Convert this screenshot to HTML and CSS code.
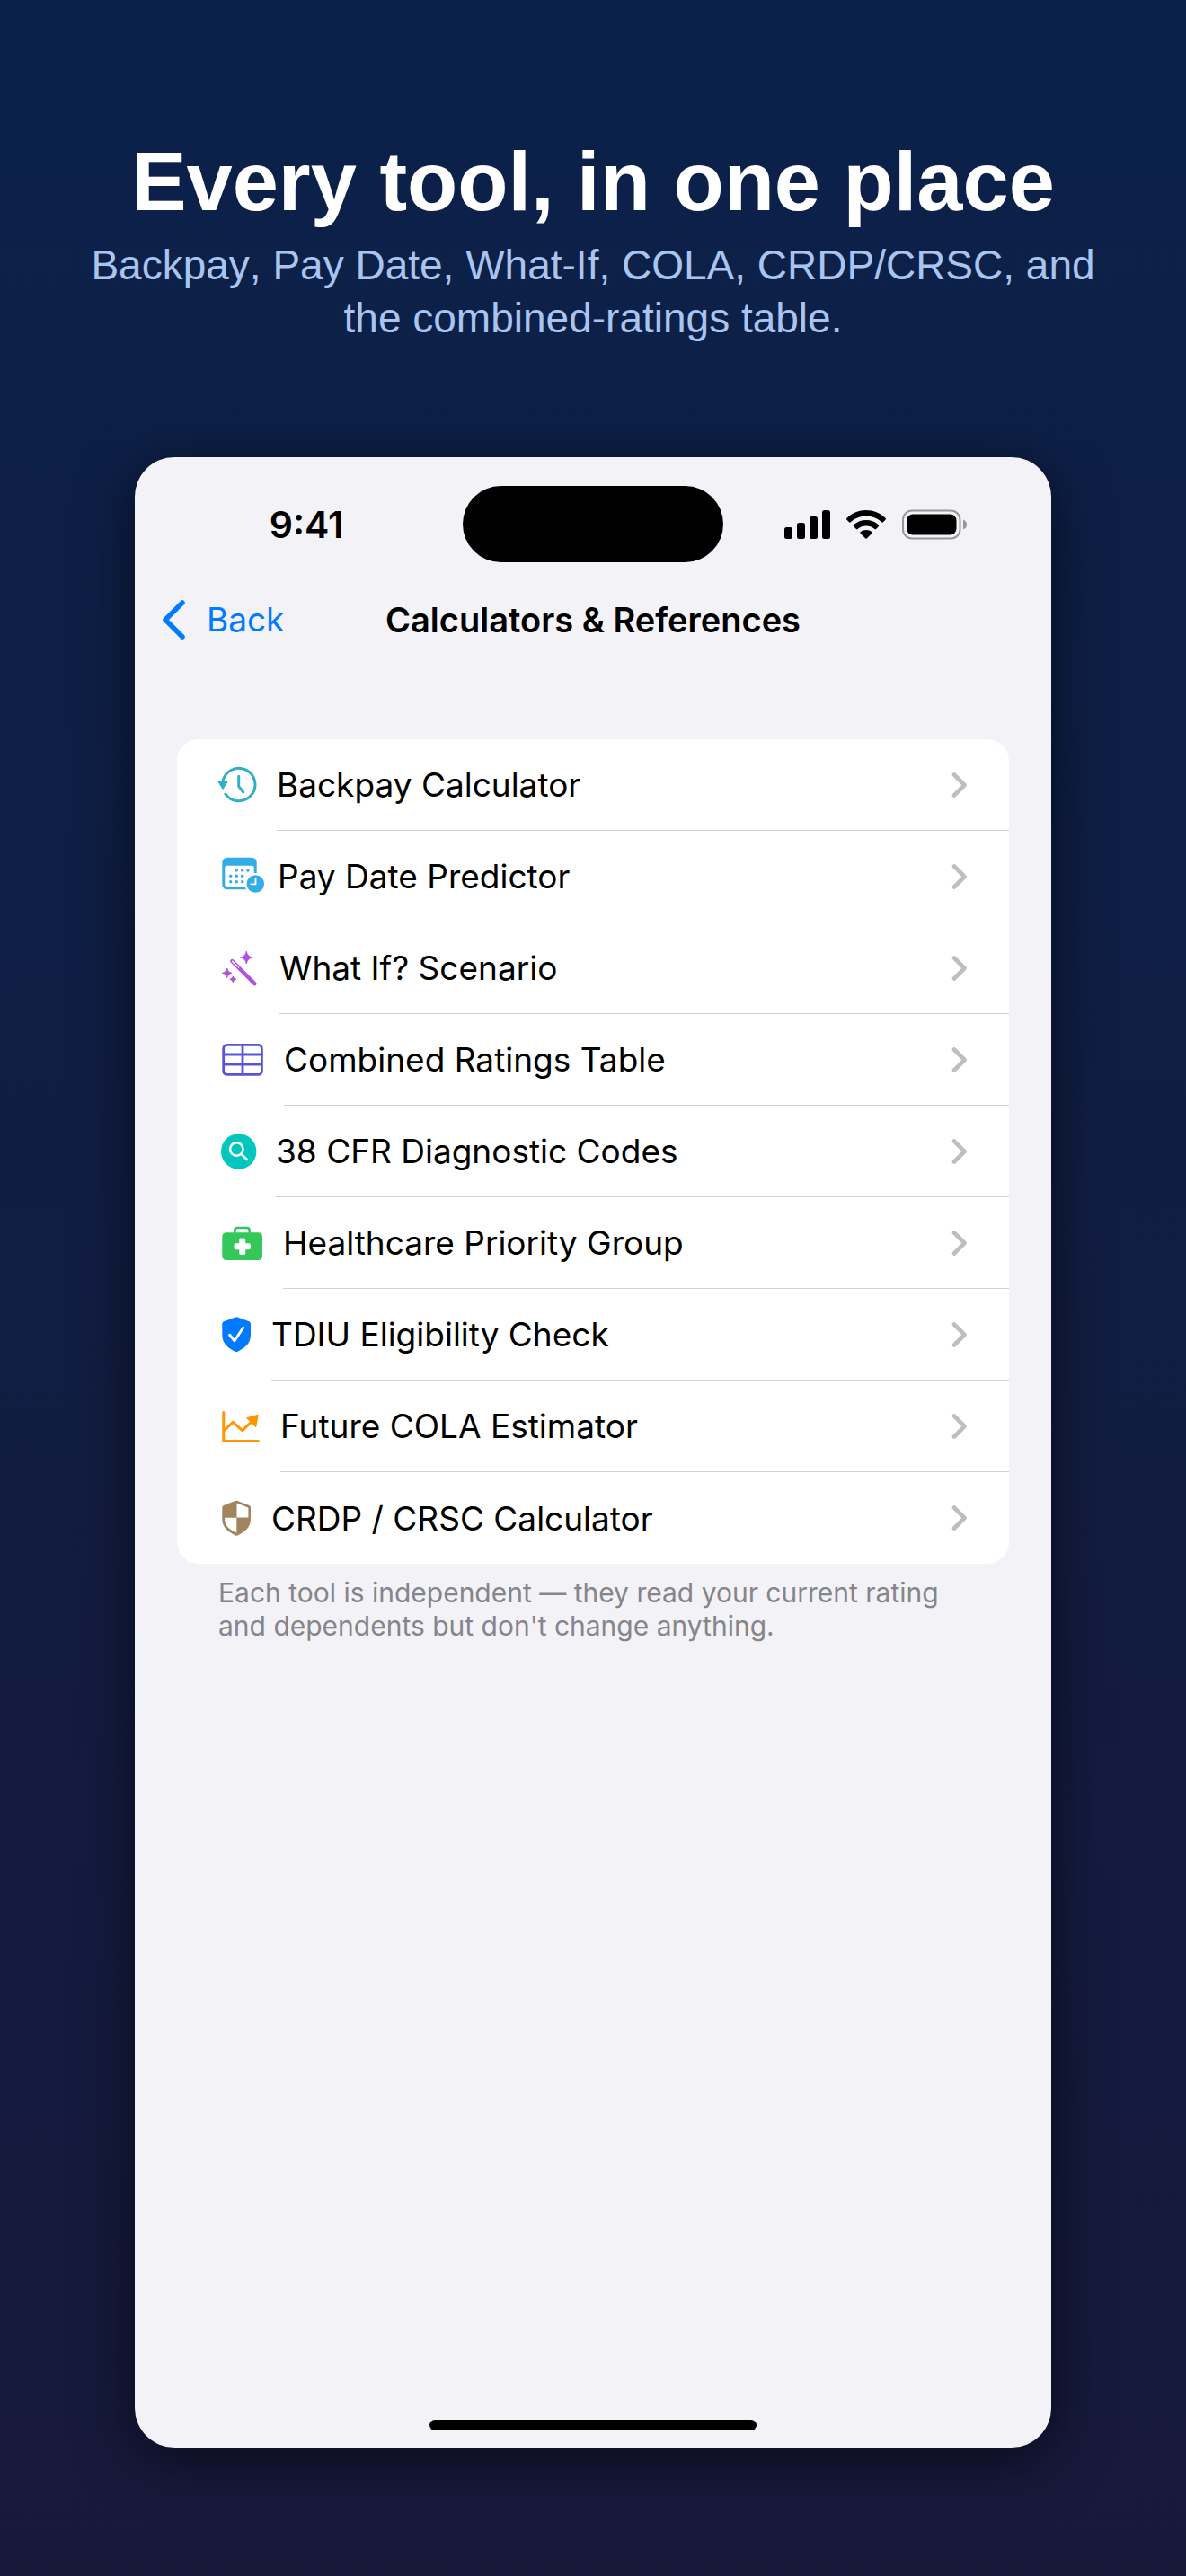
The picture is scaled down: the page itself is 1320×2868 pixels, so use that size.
FILE: index.html
```html
<!DOCTYPE html>
<html lang="en">
<head>
    <meta charset="UTF-8">
    <meta name="viewport" content="width=device-width, initial-scale=1.0">
    <title>Calculators &amp; References</title>
    <link rel="stylesheet" href="styles.css">
</head>
<body>

    <!-- Disclosure chevron, shared by every row -->
    <svg class="symbols" width="0" height="0">
        <symbol id="chevron" viewBox="0 0 18 30">
            <path d="M3 3.500 L14.500 15 L3 26.500" fill="none" stroke="#bebec0" stroke-width="4.600" stroke-linecap="round" stroke-linejoin="round"/>
        </symbol>
    </svg>

    <header class="hero">
        <h1>Every tool, in one place</h1>
        <p>Backpay, Pay Date, What-If, COLA, CRDP/CRSC, and the combined-ratings table.</p>
    </header>

    <main class="phone">

        <!-- Status bar -->
        <div class="status-bar">
            <div class="time">9:41</div>
            <div class="island"></div>
            <div class="status-icons">
                <svg width="51" height="34" viewBox="0 0 51 34">
                    <rect x="0" y="20" width="9" height="13" rx="2.5"/>
                    <rect x="14" y="15" width="9" height="18" rx="2.5"/>
                    <rect x="28" y="8" width="9" height="25" rx="2.5"/>
                    <rect x="42" y="1" width="9" height="32" rx="2.5"/>
                </svg>
                <svg width="44" height="34" viewBox="0 0 44 34">
                    <path d="M0.3 10 C12.5 -2 31.500 -2 43.700 10 Q44.300 10.800 43.700 11.500 L40.700 14.400 Q40 14.900 39.300 14.300 C29.500 5.200 14.500 5.200 4.700 14.300 Q4 14.900 3.300 14.400 L0.300 11.500 Q-0.300 10.800 0.300 10Z"/>
                    <path d="M8 17.500 C16 10.300 28 10.300 36 17.500 Q36.600 18.300 36 19 L33 21.900 Q32.300 22.500 31.500 21.900 C26 17.300 18 17.300 12.500 21.900 Q11.700 22.500 11 21.900 L8 19 Q7.400 18.300 8 17.500Z"/>
                    <path d="M15.600 25.200 C19 22.200 25 22.200 28.400 25.200 Q29 26 28.400 26.700 L22.700 32.400 Q22 33 21.300 32.400 L15.600 26.700 Q15 26 15.600 25.200Z"/>
                </svg>
                <svg width="72" height="34" viewBox="0 0 72 34">
                    <rect x="1" y="1.500" width="63.500" height="31" rx="10" fill="none" stroke="#98979b" stroke-width="2"/>
                    <rect x="5" y="5.500" width="55.500" height="23" rx="7"/>
                    <path d="M68 11.500 Q72 13 72 17 Q72 21 68 22.500Z" fill="#98979b"/>
                </svg>
            </div>
        </div>

        <!-- Navigation bar -->
        <nav class="nav-bar">
            <a class="back-link" href="#">
                <svg width="26" height="46" viewBox="0 0 26 46">
                    <path d="M23 4 L4 23 L23 42" fill="none" stroke="#007aff" stroke-width="5.500" stroke-linecap="round" stroke-linejoin="round"/>
                </svg>
                Back
            </a>
            <h2>Calculators &amp; References</h2>
        </nav>

        <!-- Tool list -->
        <ul class="tools">
            <li>
                <a href="#">
                    <svg class="icon" width="49" height="48" viewBox="0 0 49 48">
                        <g fill="none" stroke="#30b0c7" stroke-width="3" stroke-linecap="round" stroke-linejoin="round">
                            <path d="M4.800 20.500 A18.200 18.200 0 1 1 8 34.200"/>
                            <path d="M22.700 14.300 V25.300 L27.800 32"/>
                        </g>
                        <path d="M0 20.500 H10 L5 28.500Z" fill="#30b0c7" stroke="#30b0c7" stroke-linejoin="round"/>
                    </svg>
                    <span class="label">Backpay Calculator <svg class="chevron"><use href="#chevron"/></svg></span>
                </a>
            </li>
            <li>
                <a href="#">
                    <svg class="icon" width="50" height="48" viewBox="0 0 50 48">
                        <rect x="4.300" y="2.700" width="38.400" height="35.600" rx="5.500" fill="#32ade6"/>
                        <rect x="7.300" y="11.700" width="32.400" height="23.300" rx="2.500" fill="#fff"/>
                        <g fill="#32ade6">
                            <circle cx="20.300" cy="17" r="1.700"/>
                            <circle cx="26.700" cy="17" r="1.700"/>
                            <circle cx="33" cy="17" r="1.700"/>
                            <circle cx="13.700" cy="23.300" r="1.700"/>
                            <circle cx="20.300" cy="23.300" r="1.700"/>
                            <circle cx="26.700" cy="23.300" r="1.700"/>
                            <circle cx="13.700" cy="29.700" r="1.700"/>
                            <circle cx="20.300" cy="29.700" r="1.700"/>
                            <circle cx="26.700" cy="29.700" r="1.700"/>
                        </g>
                        <circle cx="41.300" cy="32" r="12" fill="#fff"/>
                        <circle cx="41.300" cy="32" r="9.800" fill="#32ade6"/>
                        <path d="M41.500 26.500 V32.300 H36.300" fill="none" stroke="#fff" stroke-width="1.800" stroke-linecap="round" stroke-linejoin="round"/>
                    </svg>
                    <span class="label">Pay Date Predictor <svg class="chevron"><use href="#chevron"/></svg></span>
                </a>
            </li>
            <li>
                <a href="#">
                    <svg class="icon" width="52" height="48" viewBox="0 0 52 48">
                        <path d="M15.300 16 L40.500 41.200" stroke="#af52de" stroke-width="4.400" stroke-linecap="round"/>
                        <path d="M15.600 16.300 L22.500 23.200" stroke="#fff" stroke-width="1.500" stroke-linecap="round" stroke-dasharray="3 1.800"/>
                        <g fill="#af52de">
                            <path d="M31.300 5 Q32.300 11 38.300 12 Q32.300 13 31.300 19 Q30.300 13 24.300 12 Q30.300 11 31.300 5Z" stroke="#af52de" stroke-width="0.800" stroke-linejoin="round"/>
                            <path d="M9.700 24 Q10.500 28.500 15 29.300 Q10.500 30.100 9.700 34.600 Q8.900 30.100 4.400 29.300 Q8.900 28.500 9.700 24Z" stroke="#af52de" stroke-width="0.800" stroke-linejoin="round"/>
                            <path d="M16.300 32.800 Q16.900 35.700 19.800 36.300 Q16.900 36.900 16.300 39.800 Q15.700 36.900 12.800 36.300 Q15.700 35.700 16.300 32.800Z" stroke="#af52de" stroke-width="0.800" stroke-linejoin="round"/>
                        </g>
                    </svg>
                    <span class="label">What If? Scenario <svg class="chevron"><use href="#chevron"/></svg></span>
                </a>
            </li>
            <li>
                <a href="#">
                    <svg class="icon" width="57" height="48" viewBox="0 0 57 48">
                        <g fill="none" stroke="#5856d6" stroke-width="2.800">
                            <rect x="5.700" y="7.400" width="42.700" height="33" rx="4"/>
                            <path d="M5.700 18 H48.400 M5.700 29 H48.400 M27 7.400 V40.400"/>
                        </g>
                    </svg>
                    <span class="label">Combined Ratings Table <svg class="chevron"><use href="#chevron"/></svg></span>
                </a>
            </li>
            <li>
                <a href="#">
                    <svg class="icon" width="48" height="48" viewBox="0 0 48 48">
                        <circle cx="22.700" cy="24" r="19.700" fill="#00c7be"/>
                        <g fill="none" stroke="#fff" stroke-width="2.600" stroke-linecap="round">
                            <circle cx="20.300" cy="21.500" r="7.200"/>
                            <path d="M25.600 26.800 L31.800 33"/>
                        </g>
                    </svg>
                    <span class="label">38 CFR Diagnostic Codes <svg class="chevron"><use href="#chevron"/></svg></span>
                </a>
            </li>
            <li>
                <a href="#">
                    <svg class="icon" width="56" height="48" viewBox="0 0 56 48">
                        <rect x="4.300" y="12.300" width="44.700" height="30.700" rx="4.500" fill="#34c759"/>
                        <path d="M18.300 13 V10 Q18.300 7 21.300 7 H31.700 Q34.700 7 34.700 10 V13" fill="none" stroke="#34c759" stroke-width="2.600"/>
                        <rect x="23.200" y="18.600" width="7" height="18.400" rx="1.800" fill="#fff"/>
                        <rect x="17.500" y="24.300" width="18.400" height="7" rx="1.800" fill="#fff"/>
                    </svg>
                    <span class="label">Healthcare Priority Group <svg class="chevron"><use href="#chevron"/></svg></span>
                </a>
            </li>
            <li>
                <a href="#">
                    <svg class="icon" width="43" height="48" viewBox="0 0 43 48">
                        <path d="M19 4.400 Q20.200 3.900 21.400 4.400 L34.300 9.300 Q36 10 36 12 V24 C36 33 30.500 38.500 21.400 42.700 Q20.200 43.300 19 42.700 C9.800 38.500 4.300 33 4.300 24 V12 Q4.300 10 6 9.300Z" fill="#007aff"/>
                        <path d="M12.600 24.300 L18 30.800 L27.600 16.300" fill="none" stroke="#fff" stroke-width="2.900" stroke-linecap="round" stroke-linejoin="round"/>
                    </svg>
                    <span class="label">TDIU Eligibility Check <svg class="chevron"><use href="#chevron"/></svg></span>
                </a>
            </li>
            <li>
                <a href="#">
                    <svg class="icon" width="53" height="48" viewBox="0 0 53 48">
                        <g fill="none" stroke="#ff9500" stroke-width="3" stroke-linecap="round" stroke-linejoin="round">
                            <path d="M5.800 8.500 V40.500 H44.500"/>
                            <path d="M6.500 28.500 L16.300 19.300 L26.700 28.700 L38.500 17.500"/>
                        </g>
                        <path d="M44.300 11.300 L31.500 14.700 L41.700 24.700Z" fill="#ff9500" stroke="#ff9500" stroke-linejoin="round"/>
                    </svg>
                    <span class="label">Future COLA Estimator <svg class="chevron"><use href="#chevron"/></svg></span>
                </a>
            </li>
            <li>
                <a href="#">
                    <svg class="icon" width="43" height="48" viewBox="0 0 43 48">
                        <path d="M19 5.100 Q20.200 4.600 21.400 5.100 L34.300 10 Q36 10.700 36 12.700 V24.700 C36 33.700 30.500 39.200 21.400 43.400 Q20.200 44 19 43.400 C9.800 39.200 4.300 33.700 4.300 24.700 V12.700 Q4.300 10.700 6 10Z" fill="#a2845e"/>
                        <path d="M20.500 7.500 L32.600 12.300 Q33.400 12.700 33.400 13.500 V23.500 H20.500Z" fill="#fff"/>
                        <path d="M20.300 23.700 V40.500 C11 36.500 7 32 7 23.700Z" fill="#fff"/>
                    </svg>
                    <span class="label">CRDP / CRSC Calculator <svg class="chevron"><use href="#chevron"/></svg></span>
                </a>
            </li>
        </ul>

        <p class="footnote">Each tool is independent — they read your current rating and dependents but don't change anything.</p>

        <div class="home-indicator"></div>
    </main>

</body>
</html>
```

FILE: styles.css
```css
* {
    box-sizing: border-box;
}

body {
    margin: 0;
    min-height: 100vh;
    padding: 150px 150px 143px;
    display: flex;
    flex-direction: column;
    background: linear-gradient(#0b214a, #17193b);
    font-family: Inter, 'Liberation Sans', sans-serif;
}

.symbols {
    position: absolute;
}

.hero {
    margin: 0 -60px 125px;
    text-align: center;
    font-family: 'Liberation Sans', Arial, sans-serif;
    font-kerning: none;
}

.hero h1 {
    margin: 0;
    font-size: 92px;
    line-height: 104px;
    color: #fff;
}

.hero p {
    margin: 12px 0 0;
    font-size: 46px;
    line-height: 59px;
    color: #a9c4ee;
}

.phone {
    flex: 1;
    display: flex;
    flex-direction: column;
    background: #f2f2f7;
    border-radius: 44px;
    box-shadow: 0 12px 64px rgba(0, 0, 0, 0.6);
}

/* Status bar */
.status-bar {
    display: grid;
    grid-template-columns: 1fr 290px 1fr;
    align-items: center;
    margin-top: 32px;
}

.time {
    padding-left: 17px;
    text-align: center;
    font-size: 41px;
    font-weight: 600;
}

.island {
    height: 85px;
    border-radius: 43px;
    background: #000;
}

.status-icons {
    display: flex;
    justify-content: flex-end;
    gap: 18px;
    padding-right: 94px;
}

/* Navigation bar */
.nav-bar {
    display: grid;
    grid-template-columns: 1fr auto 1fr;
    align-items: center;
    padding: 0 30px;
    margin-top: 40px;
    line-height: 48px;
    font-size: 37px;
}

.nav-bar h2 {
    margin: 0;
    font-size: 38px;
    font-weight: 600;
}

.back-link {
    display: flex;
    align-items: center;
    gap: 24px;
    color: #007aff;
    text-decoration: none;
}

/* Tool list */
.tools {
    list-style: none;
    margin: 109px 47px 0;
    padding: 0;
    background: #fff;
    border-radius: 24px;
}

.tools a {
    display: flex;
    align-items: center;
    gap: 16px;
    height: 102px;
    padding-left: 46px;
    color: #000;
    text-decoration: none;
    font-size: 37px;
}

.icon {
    flex: none;
    overflow: visible;
}

.label {
    flex: 1;
    display: flex;
    align-items: center;
    justify-content: space-between;
    height: 102px;
    padding-right: 46px;
    border-bottom: 1px solid #d1d1d3;
}

.tools li:last-child .label {
    border-bottom: none;
}

.chevron {
    width: 18px;
    height: 30px;
}

.footnote {
    margin: 14px 93px 0;
    font-size: 30px;
    line-height: 37px;
    color: #85858b;
}

.home-indicator {
    width: 364px;
    height: 12px;
    margin: auto auto 19px;
    border-radius: 6px;
    background: #000;
}
```
